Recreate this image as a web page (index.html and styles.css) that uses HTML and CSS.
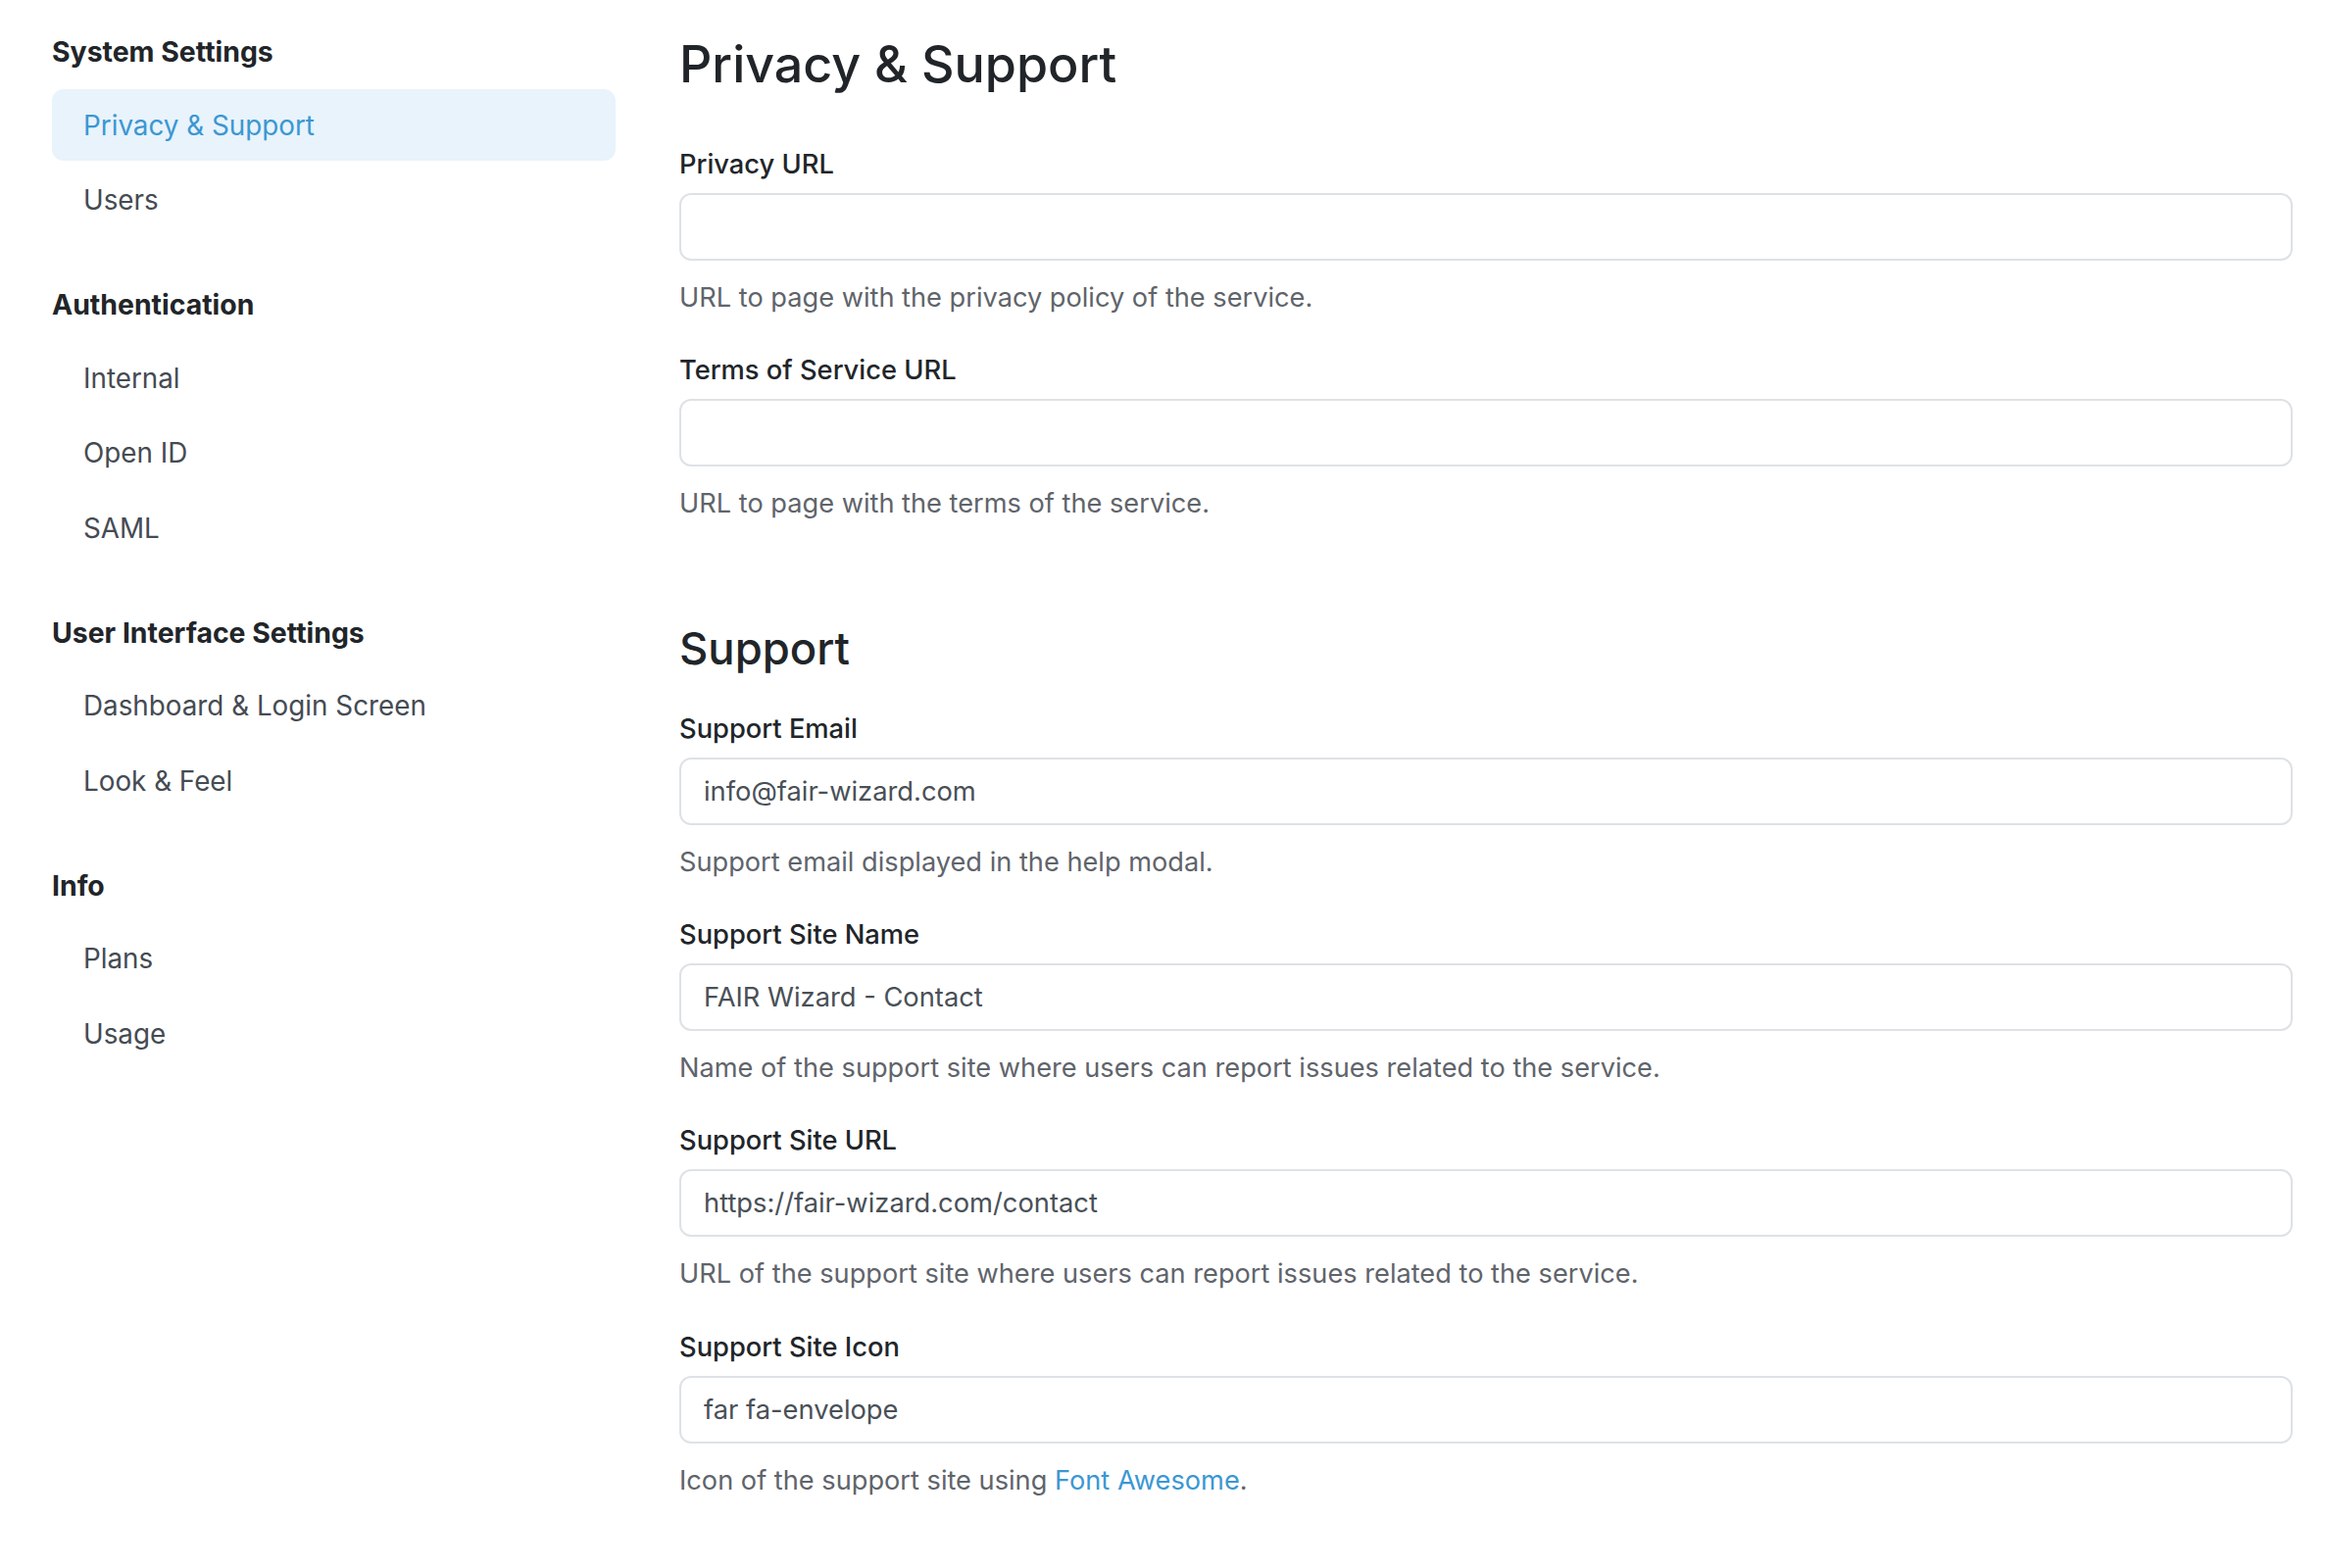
FILE: index.html
```html
<!DOCTYPE html>
<html lang="en">
<head>
<meta charset="utf-8">
<title>Privacy &amp; Support</title>
<link rel="stylesheet" href="styles.css">
</head>
<body>
<div class="layout">
  <nav class="sidebar">
    <div class="nav-group">
      <div class="nav-heading">System Settings</div>
      <a class="nav-item active" href="#">Privacy &amp; Support</a>
      <a class="nav-item" href="#">Users</a>
    </div>
    <div class="nav-group">
      <div class="nav-heading">Authentication</div>
      <a class="nav-item" href="#">Internal</a>
      <a class="nav-item" href="#">Open ID</a>
      <a class="nav-item" href="#">SAML</a>
    </div>
    <div class="nav-group">
      <div class="nav-heading">User Interface Settings</div>
      <a class="nav-item" href="#">Dashboard &amp; Login Screen</a>
      <a class="nav-item" href="#">Look &amp; Feel</a>
    </div>
    <div class="nav-group">
      <div class="nav-heading">Info</div>
      <a class="nav-item" href="#">Plans</a>
      <a class="nav-item" href="#">Usage</a>
    </div>
  </nav>
  <main class="content">
    <h1 class="page-title">Privacy &amp; Support</h1>
    <div class="form-group">
      <label class="form-label">Privacy URL</label>
      <input class="form-control" type="text" value="">
      <p class="form-text">URL to page with the privacy policy of the service.</p>
    </div>
    <div class="form-group">
      <label class="form-label">Terms of Service URL</label>
      <input class="form-control" type="text" value="">
      <p class="form-text">URL to page with the terms of the service.</p>
    </div>
    <h2 class="section-title">Support</h2>
    <div class="form-group">
      <label class="form-label">Support Email</label>
      <input class="form-control" type="text" value="info@fair-wizard.com">
      <p class="form-text">Support email displayed in the help modal.</p>
    </div>
    <div class="form-group">
      <label class="form-label">Support Site Name</label>
      <input class="form-control" type="text" value="FAIR Wizard - Contact">
      <p class="form-text">Name of the support site where users can report issues related to the service.</p>
    </div>
    <div class="form-group">
      <label class="form-label">Support Site URL</label>
      <input class="form-control" type="text" value="https://fair-wizard.com/contact">
      <p class="form-text">URL of the support site where users can report issues related to the service.</p>
    </div>
    <div class="form-group">
      <label class="form-label">Support Site Icon</label>
      <input class="form-control" type="text" value="far fa-envelope">
      <p class="form-text">Icon of the support site using <a class="link" href="#">Font Awesome</a>.</p>
    </div>
  </main>
</div>
</body>
</html>
```
FILE: styles.css
```css
* { box-sizing: border-box; }

html, body {
  margin: 0;
  padding: 0;
  background: #ffffff;
}

body {
  font-family: Inter, "Noto Sans", "Liberation Sans", sans-serif;
  color: #212529;
}

.layout {
  display: flex;
  align-items: flex-start;
  padding: 0 33px 0 53px;
  gap: 65px;
}

/* Sidebar */
.sidebar {
  flex: 0 0 575px;
  display: flex;
  flex-direction: column;
  gap: 50.5px;
  padding-top: 33px;
}

.nav-group {
  display: flex;
  flex-direction: column;
  gap: 3.5px;
}

.nav-heading {
  font-size: 28.4px;
  font-weight: 700;
  line-height: 40px;
  color: #212529;
  margin-bottom: 14.5px;
}

.nav-item {
  display: flex;
  align-items: center;
  height: 73px;
  padding: 0 32px;
  border-radius: 12px;
  font-size: 27.8px;
  color: #454b53;
  text-decoration: none;
}

.nav-item.active {
  background: #e8f3fb;
  color: #3b97d3;
}

/* Content */
.content {
  flex: 1 1 auto;
  min-width: 0;
}

.page-title {
  margin: 32px 0 0;
  font-size: 52px;
  line-height: 68px;
  font-weight: 500;
  color: #212529;
}

.section-title {
  margin: 97.5px 0 0;
  font-size: 45.4px;
  line-height: 60px;
  font-weight: 500;
  color: #212529;
}

.page-title + .form-group { margin-top: 48px; }
.section-title + .form-group { margin-top: 32px; }

.form-group {
  display: flex;
  flex-direction: column;
}

.form-group + .form-group { margin-top: 34.3px; }

.form-label {
  font-size: 27.3px;
  line-height: 40px;
  font-weight: 500;
  color: #212529;
  margin-bottom: 9px;
}

.form-control {
  display: block;
  width: 100%;
  height: 69px;
  padding: 0 23px;
  border: 2px solid #dee2e6;
  border-radius: 12px;
  font-family: inherit;
  font-size: 27.3px;
  color: #495057;
  background: #ffffff;
  outline: none;
}

.form-text {
  margin: 18px 0 0;
  font-size: 27.2px;
  line-height: 40px;
  color: #5f646b;
}

.link {
  color: #3b97d3;
  text-decoration: none;
}
```
